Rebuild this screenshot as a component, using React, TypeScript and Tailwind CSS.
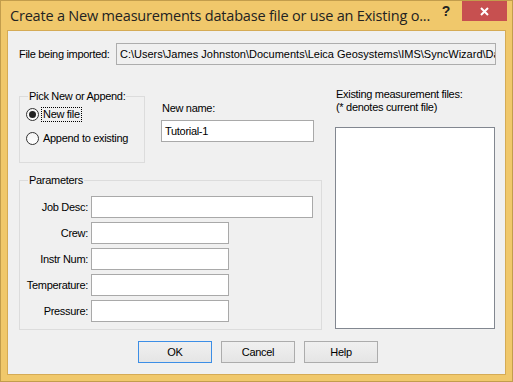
import React from "react";

const ui = "font-['Liberation_Sans',Arial,sans-serif] text-[11px] tracking-[-0.3px] text-black";

function TextBox({ w, value }: { w: string; value?: string }) {
  return (
    <div
      className={`${w} h-[22px] bg-white border border-[#a9a9a9] flex items-center px-[3px] overflow-hidden whitespace-nowrap`}
    >
      {value}
    </div>
  );
}

function Radio({ checked, label, focused }: { checked?: boolean; label: string; focused?: boolean }) {
  return (
    <div className="flex items-center h-[16px]">
      <div className="w-[13px] h-[13px] rounded-full border border-[#333] bg-gradient-to-b from-[#f4f4f4] to-white flex items-center justify-center">
        {checked && <div className="w-[7px] h-[7px] rounded-full bg-[#222]" />}
      </div>
      <span
        className={`ml-[2px] px-[1px] leading-[13px] border ${
          focused ? "border-dotted border-black" : "border-transparent"
        }`}
      >
        {label}
      </span>
    </div>
  );
}

function GroupBox({
  label,
  className,
  children,
}: {
  label: string;
  className: string;
  children: React.ReactNode;
}) {
  return (
    <div className={`relative border border-[#dcdcdc] ${className}`}>
      <span className="absolute top-[-7px] left-[8px] px-[1px] bg-[#f0f0f0] leading-[13px]">
        {label}
      </span>
      {children}
    </div>
  );
}

function Button({ label, def }: { label: string; def?: boolean }) {
  return (
    <button
      className={`w-[74px] h-[22px] flex items-center justify-center border bg-gradient-to-b from-[#f0f0f0] to-[#e5e5e5] ${
        def ? "border-[#3c8ee6]" : "border-[#acacac]"
      }`}
    >
      {label}
    </button>
  );
}

const params = [
  { label: "Job Desc:", w: "w-[222px]" },
  { label: "Crew:", w: "w-[138px]" },
  { label: "Instr Num:", w: "w-[138px]" },
  { label: "Temperature:", w: "w-[138px]" },
  { label: "Pressure:", w: "w-[138px]" },
];

export default function App() {
  return (
    <div className="w-[513px] h-[382px] flex flex-col border border-[#c29d4c] bg-[#f0c86b]">
      {/* title bar */}
      <div className="h-[29px] flex items-start shrink-0">
        <div className="flex-1 h-[29px] flex items-center pl-[9px] font-['Open_Sans',sans-serif] text-[14.5px] tracking-[-0.2px] text-[#222] whitespace-nowrap overflow-hidden">
          Create a New measurements database file or use an Existing o...
        </div>
        <div className="w-[16px] h-[20px] flex items-center justify-center font-['Liberation_Sans',sans-serif] font-bold text-[14px] text-[#222] mr-[8px]">
          ?
        </div>
        <div className="w-[45px] h-[20px] bg-[#c75050] flex items-center justify-center mr-[5px]">
          <svg width="9" height="9" viewBox="0 0 9 9">
            <path d="M1 1 L8 8 M8 1 L1 8" stroke="white" strokeWidth="2" />
          </svg>
        </div>
      </div>

      {/* client area */}
      <div className="flex-1 mx-[6px] mb-[6px] border border-[#d5ab55] bg-[#f0f0f0]">
        <div className={`${ui} flex flex-col pl-[11px] pt-[12px]`}>
          <div className="flex items-center h-[22px]">
            <span className="w-[97px]">File being imported:</span>
            <div className="w-[380px] h-[22px] border border-[#adadad] bg-[#f0f0f0] flex items-center pl-[3px] overflow-hidden whitespace-nowrap tracking-normal">
              C:\Users\James Johnston\Documents\Leica Geosystems\IMS\SyncWizard\Data\Tutorial-1.gsi
            </div>
          </div>

          <div className="flex mt-[23px]">
            {/* left column */}
            <div className="w-[303px] flex flex-col">
              <div className="flex mt-[8px]">
                <GroupBox label="Pick New or Append:" className="w-[126px] h-[67px] flex flex-col pt-[9px] pl-[6px] gap-[8px]">
                  <Radio checked focused label="New file" />
                  <Radio label="Append to existing" />
                </GroupBox>
                <div className="ml-[16px] flex flex-col">
                  <span className="mt-[6px] pl-[1px] leading-[13px]">New name:</span>
                  <div className="mt-[5px]">
                    <TextBox w="w-[153px]" value="Tutorial-1" />
                  </div>
                </div>
              </div>

              <GroupBox label="Parameters" className="mt-[17px] h-[150px] flex flex-col pt-[15px] gap-[4px]">
                {params.map((p) => (
                  <div key={p.label} className="flex items-center">
                    <span className="w-[68px] text-right">{p.label}</span>
                    <div className="ml-[3px]">
                      <TextBox w={p.w} />
                    </div>
                  </div>
                ))}
              </GroupBox>
            </div>

            {/* right column */}
            <div className="ml-[13px] flex flex-col">
              <span className="pl-[1px] leading-[13px]">Existing measurement files:</span>
              <span className="pl-[1px] leading-[13px]">(* denotes current file)</span>
              <div className="mt-[13px] w-[160px] h-[202px] bg-white border border-[#828790]" />
            </div>
          </div>

          <div className="flex mt-[11px] pl-[119px] gap-[9px]">
            <Button def label="OK" />
            <Button label="Cancel" />
            <Button label="Help" />
          </div>
        </div>
      </div>
    </div>
  );
}
